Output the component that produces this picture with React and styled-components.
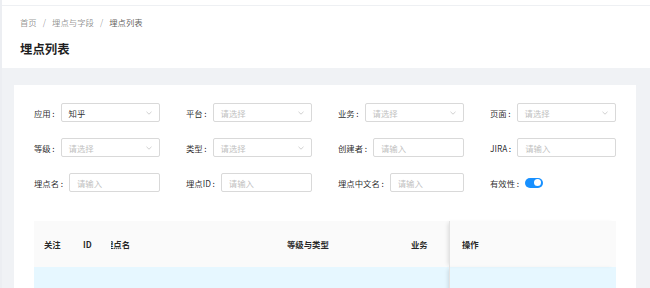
import React from "react";
import styled, { createGlobalStyle } from "styled-components";

const GlobalStyle = createGlobalStyle`
  html, body {
    margin: 0;
    padding: 0;
    background: #f0f2f5;
    font-family: "Noto Sans CJK SC", "Noto Sans", sans-serif;
    color: rgba(0, 0, 0, 0.85);
  }
  * { box-sizing: border-box; }
`;

const Layout = styled.div`
  width: 650px;
  height: 288px;
  overflow: hidden;
  border-left: 2px solid #eceef2;
  background: #f0f2f5;
`;

const TopBar = styled.div`
  height: 6px;
  background: #fff;
  border-bottom: 1px solid #eef0f3;
`;

const PageHeader = styled.div`
  background: #fff;
  height: 62px;
  padding: 10px 18px 0;
`;

const Crumbs = styled.div`
  display: flex;
  align-items: center;
  height: 12px;
  font-size: 8.4px;
  color: rgba(0, 0, 0, 0.45);
`;

const Crumb = styled.span`
  color: ${(p) => (p.$last ? "rgba(0,0,0,0.65)" : "rgba(0,0,0,0.45)")};
`;

const Sep = styled.span`
  margin: 0 6px;
  color: rgba(0, 0, 0, 0.4);
`;

const Title = styled.h1`
  margin: 12px 0 0;
  font-size: 12.4px;
  line-height: 18px;
  font-weight: 600;
  color: rgba(0, 0, 0, 0.88);
`;

const Main = styled.div`
  padding: 17px 14px 0 12px;
`;

const Card = styled.div`
  background: #fff;
  padding: 18px 20px 0;
  height: 220px;
`;

const FormGrid = styled.div`
  display: grid;
  grid-template-columns: repeat(4, 126px);
  column-gap: 26px;
  row-gap: 16px;
`;

const Item = styled.div`
  display: flex;
  align-items: center;
  height: 19px;
  font-size: 8.4px;
`;

const Label = styled.span`
  white-space: nowrap;
  color: rgba(0, 0, 0, 0.85);
  margin-right: 6px;
  &::after {
    content: ":";
    margin-left: 1.5px;
  }
`;

const Control = styled.div`
  flex: 1;
  height: 19px;
  border: 1px solid #d9d9d9;
  border-radius: 2px;
  padding: 0 7px;
  display: flex;
  align-items: center;
  justify-content: space-between;
  color: ${(p) => (p.$filled ? "rgba(0,0,0,0.85)" : "#bfbfbf")};
  background: #fff;
`;

const TextInput = styled.input`
  flex: 1;
  min-width: 0;
  height: 19px;
  border: 1px solid #d9d9d9;
  border-radius: 2px;
  padding: 0 7px;
  font: inherit;
  font-size: 8.4px;
  outline: none;
  &::placeholder {
    color: #bfbfbf;
  }
`;

const Switch = styled.span`
  width: 18px;
  height: 10px;
  border-radius: 5px;
  background: #1890ff;
  position: relative;
  &::after {
    content: "";
    position: absolute;
    right: 1.5px;
    top: 1.5px;
    width: 7px;
    height: 7px;
    border-radius: 50%;
    background: #fff;
  }
`;

const Table = styled.div`
  margin-top: 29px;
  width: 582px;
  font-size: 8.4px;
`;

const Row = styled.div`
  display: flex;
  height: 46px;
  line-height: 12px;
  background: ${(p) => (p.$head ? "#fafafa" : "#e6f7ff")};
  font-weight: ${(p) => (p.$head ? 600 : 400)};
`;

const Cell = styled.div`
  flex: none;
  width: ${(p) => p.$w}px;
  padding-left: 10px;
  display: flex;
  align-items: center;
  white-space: nowrap;
`;

const Scroll = styled.div`
  flex: 1;
  overflow: hidden;
  display: flex;
`;

const ScrollInner = styled.div`
  display: flex;
  margin-left: -16px;
`;

const FixedRight = styled.div`
  flex: none;
  width: 167px;
  padding-left: 12px;
  display: flex;
  align-items: center;
  border-left: 1px solid #e3e3e3;
  box-shadow: -3px 0 4px -2px rgba(0, 0, 0, 0.12);
`;

const Arrow = () => (
  <svg width="6" height="4" viewBox="0 0 6 4" fill="none">
    <path d="M0.5 0.8 L3 3.2 L5.5 0.8" stroke="#c4c4c4" strokeWidth="0.8" />
  </svg>
);

const SelectBox = ({ value, placeholder = "请选择" }) => (
  <Control $filled={!!value}>
    <span>{value || placeholder}</span>
    <Arrow />
  </Control>
);

const fields = [
  { label: "应用", type: "select", value: "知乎" },
  { label: "平台", type: "select" },
  { label: "业务", type: "select" },
  { label: "页面", type: "select" },
  { label: "等级", type: "select" },
  { label: "类型", type: "select" },
  { label: "创建者", type: "input" },
  { label: "JIRA", type: "input" },
  { label: "埋点名", type: "input" },
  { label: "埋点ID", type: "input" },
  { label: "埋点中文名", type: "input" },
  { label: "有效性", type: "switch" },
];

const TableRow = ({ head }) => (
  <Row $head={head}>
    <Cell $w={39}>{head && "关注"}</Cell>
    <Cell $w={38}>{head && "ID"}</Cell>
    <Scroll>
      <ScrollInner>
        <Cell $w={182}>{head && "埋点名"}</Cell>
        <Cell $w={124}>{head && "等级与类型"}</Cell>
        <Cell $w={80}>{head && "业务"}</Cell>
      </ScrollInner>
    </Scroll>
    <FixedRight>{head && "操作"}</FixedRight>
  </Row>
);

export default function App() {
  return (
    <Layout>
      <GlobalStyle />
      <TopBar />
      <PageHeader>
        <Crumbs>
          <Crumb>首页</Crumb>
          <Sep>/</Sep>
          <Crumb>埋点与字段</Crumb>
          <Sep>/</Sep>
          <Crumb $last>埋点列表</Crumb>
        </Crumbs>
        <Title>埋点列表</Title>
      </PageHeader>
      <Main>
        <Card>
          <FormGrid>
            {fields.map((f) => (
              <Item key={f.label}>
                <Label>{f.label}</Label>
                {f.type === "select" && <SelectBox value={f.value} />}
                {f.type === "input" && <TextInput placeholder="请输入" />}
                {f.type === "switch" && <Switch />}
              </Item>
            ))}
          </FormGrid>
          <Table>
            <TableRow head />
            <TableRow />
          </Table>
        </Card>
      </Main>
    </Layout>
  );
}
